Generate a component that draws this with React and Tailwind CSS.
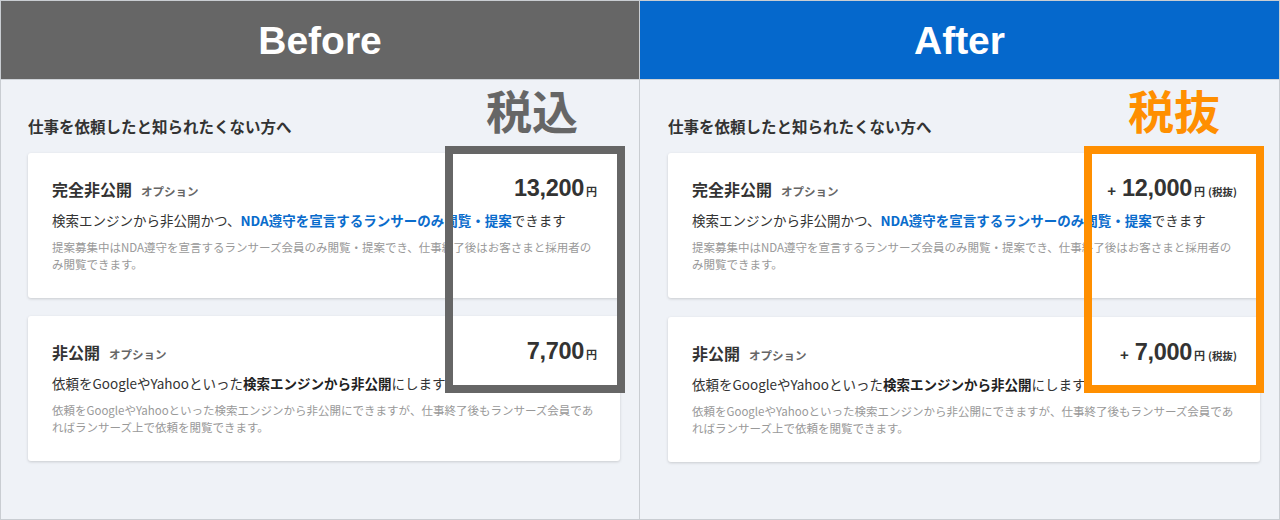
const OPTIONS = [
  {
    title: "完全非公開",
    lead: [
      { t: "検索エンジンから非公開かつ、" },
      { t: "NDA遵守を宣言するランサーのみ閲覧・提案", kind: "link" },
      { t: "できます" },
    ],
    note: "提案募集中はNDA遵守を宣言するランサーズ会員のみ閲覧・提案でき、仕事終了後はお客さまと採用者のみ閲覧できます。",
    before: "13,200",
    after: "12,000",
  },
  {
    title: "非公開",
    lead: [
      { t: "依頼をGoogleやYahooといった" },
      { t: "検索エンジンから非公開", kind: "strong" },
      { t: "にします" },
    ],
    note: "依頼をGoogleやYahooといった検索エンジンから非公開にできますが、仕事終了後もランサーズ会員であればランサーズ上で依頼を閲覧できます。",
    before: "7,700",
    after: "7,000",
  },
];

export default function App() {
  return (
    <div className="w-[1280px] h-[520px] flex border border-[#c9cdd2] bg-[#eff2f7] overflow-hidden font-['Noto_Sans_CJK_JP',sans-serif]">
      <Panel
        label="Before"
        headerClass="bg-[#666666]"
        widthClass="w-[638px]"
        padClass="pl-[27px] pr-[18px]"
        mode="before"
      />
      <div className="w-[1px] shrink-0 bg-[#c9cdd2]" />
      <Panel
        label="After"
        headerClass="bg-[#0568cc]"
        widthClass="w-[639px]"
        padClass="pl-[28px] pr-[19px]"
        mode="after"
      />
    </div>
  );
}

function Panel({ label, headerClass, widthClass, padClass, mode }) {
  const after = mode === "after";
  return (
    <div className={`relative shrink-0 flex flex-col ${widthClass}`}>
      <div
        className={`h-[79px] border-b border-[#cfd3d8] flex items-center justify-center ${headerClass}`}
      >
        <span className="text-white text-[39px] font-bold leading-none font-['Liberation_Sans',Arial,sans-serif]">
          {label}
        </span>
      </div>

      <div className={`pt-[35px] ${padClass}`}>
        <h2 className="text-[15.5px] leading-[22px] font-bold text-[#333]">
          仕事を依頼したと知られたくない方へ
        </h2>
        <div className={`mt-[16px] flex flex-col ${after ? "gap-[19px]" : "gap-[18px]"}`}>
          {OPTIONS.map((o) => (
            <OptionCard key={o.title} option={o} after={after} />
          ))}
        </div>
      </div>

      {/* annotation */}
      <span
        className={`absolute top-[85px] text-[46px] leading-none font-bold ${
          after ? "left-[488px] text-[#ff8f00]" : "left-[485px] text-[#666666]"
        }`}
      >
        {after ? "税抜" : "税込"}
      </span>
      <div
        className={`absolute left-[444px] top-[145px] w-[180px] h-[247px] border-[8px] ${
          after ? "border-[#ff8f00]" : "border-[#666666]"
        }`}
      />
    </div>
  );
}

function OptionCard({ option, after }) {
  return (
    <div className="w-[592px] h-[145px] bg-white rounded-[3px] shadow-[0_1px_3px_rgba(0,0,0,0.16)] pt-[24px] pl-[24px] pr-[23px]">
      <div className="flex items-center justify-between h-[24px]">
        <div className="flex items-baseline gap-[9px]">
          <span className="text-[16px] leading-[24px] font-bold text-[#333]">{option.title}</span>
          <span className="text-[11.5px] font-bold text-[#666]">オプション</span>
        </div>
        <Price value={after ? option.after : option.before} after={after} />
      </div>

      <p className="mt-[9px] text-[13.5px] leading-[20px] text-[#333] whitespace-nowrap">
        {option.lead.map((p) => (
          <span
            key={p.t}
            className={
              p.kind === "link"
                ? "font-bold text-[#0a6ccc]"
                : p.kind === "strong"
                ? "font-bold text-[#222]"
                : ""
            }
          >
            {p.t}
          </span>
        ))}
      </p>

      <p className="mt-[9px] text-[11.5px] leading-[17px] text-[#999]">{option.note}</p>
    </div>
  );
}

function Price({ value, after }) {
  return (
    <div className="flex items-baseline leading-none text-[#333] font-bold font-['Liberation_Sans','Noto_Sans_CJK_JP',sans-serif]">
      {after && <span className="text-[15px] mr-[6px]">+</span>}
      <span className="text-[23.5px] tracking-[-0.3px]">{value}</span>
      <span className="text-[11px] ml-[2px] font-['Noto_Sans_CJK_JP',sans-serif]">円</span>
      {after && (
        <span className="text-[10.5px] ml-[3px] font-['Noto_Sans_CJK_JP',sans-serif]">(税抜)</span>
      )}
    </div>
  );
}
